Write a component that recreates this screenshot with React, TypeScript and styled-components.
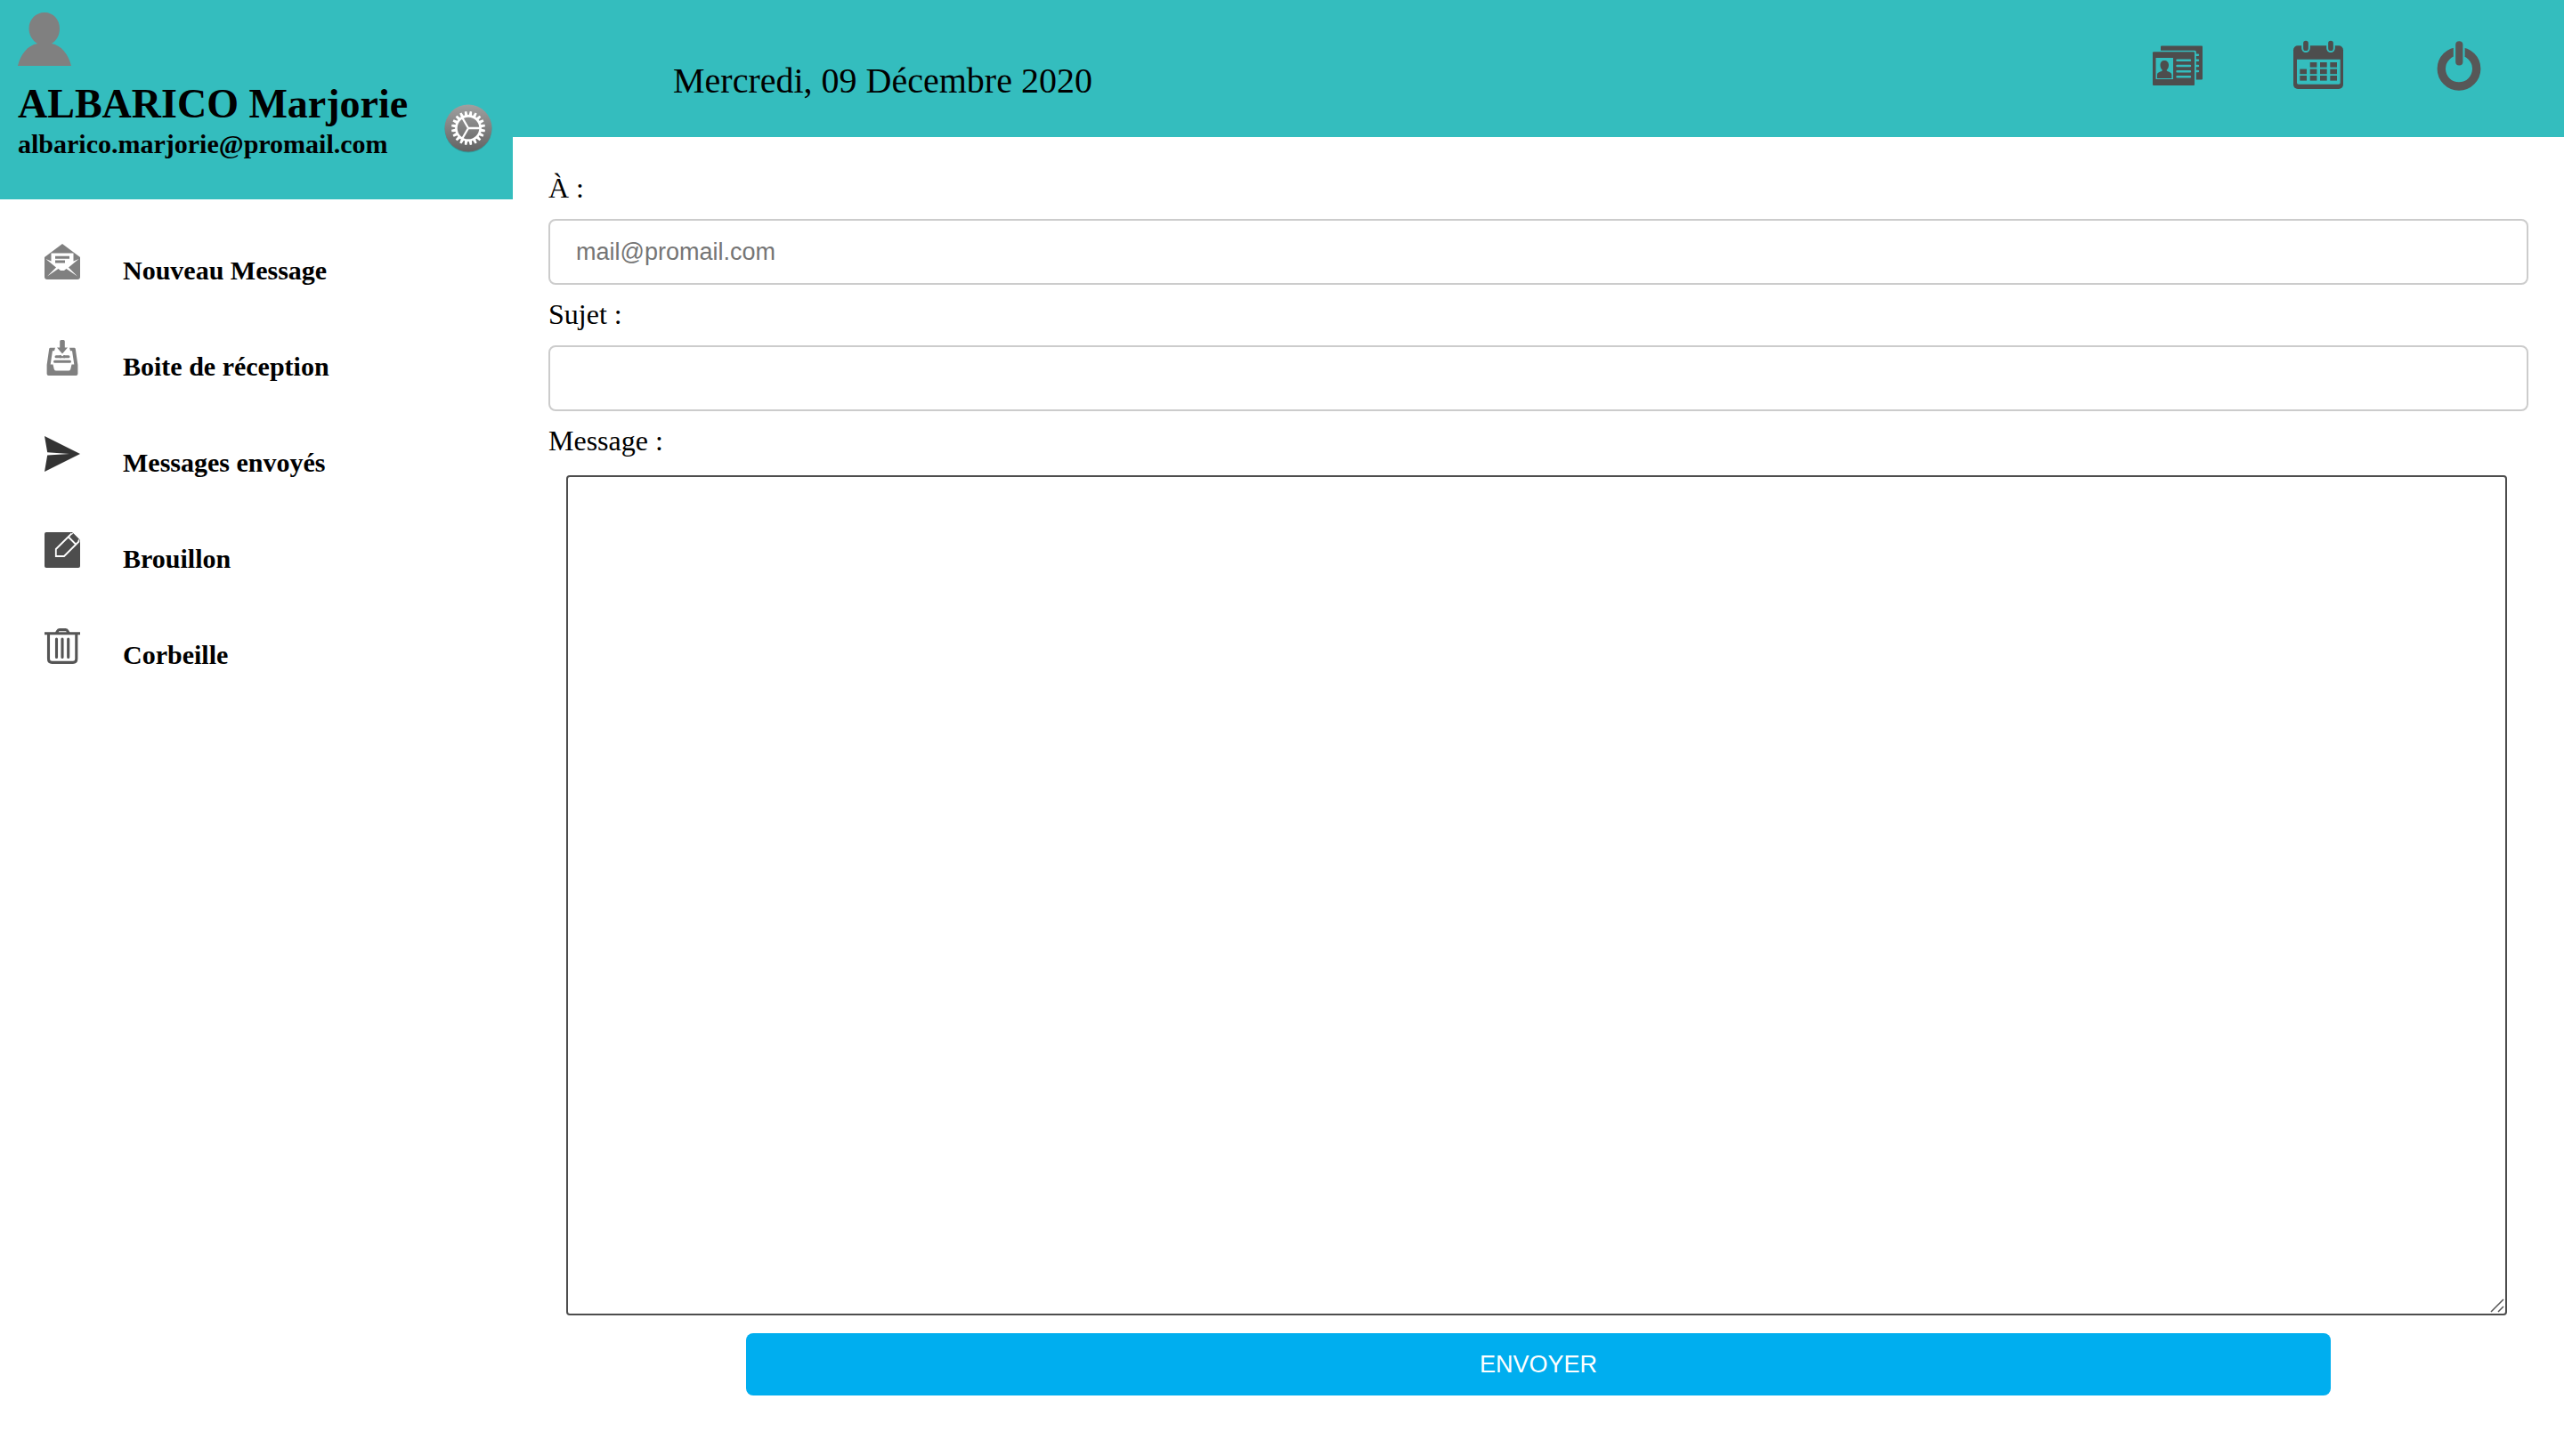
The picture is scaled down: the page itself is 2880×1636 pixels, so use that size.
import React from "react";
import styled, { createGlobalStyle } from "styled-components";

const TEAL = "#34bdbe";
const SERIF = '"Liberation Serif", "Times New Roman", serif';
const SANS = '"Liberation Sans", Arial, sans-serif';

const GlobalStyle = createGlobalStyle`
  *, *::before, *::after { box-sizing: border-box; }
  body { margin: 0; background: #fff; color: #000; font-family: ${SERIF}; }
  h1, p, ul { margin: 0; padding: 0; }
`;

const Layout = styled.div`
  display: grid;
  grid-template-columns: 20% 1fr;
  align-items: start;
`;

const Profile = styled.div`
  padding: 14px 14px 44px 20px;
  background: ${TEAL};
`;

const ProfileRow = styled.div`
  display: flex;
  align-items: flex-end;
  justify-content: space-between;
  margin-top: 16px;
`;

const ProfileName = styled.h1`
  font-size: 46px;
  line-height: 54px;
  font-weight: bold;
  white-space: nowrap;
`;

const ProfileMail = styled.p`
  font-size: 30px;
  line-height: 36px;
  font-weight: bold;
`;

const SettingsButton = styled.button`
  display: grid;
  place-items: center;
  width: 72px;
  height: 72px;
  padding: 0;
  border: 0;
  background: none;
  cursor: pointer;
`;

const Icon = styled.svg<{ $size: number }>`
  display: block;
  flex: none;
  width: ${(p) => p.$size}px;
  height: ${(p) => p.$size}px;
  overflow: visible;
`;

const FolderList = styled.ul`
  display: flex;
  flex-direction: column;
  gap: 60px;
  padding: 50px;
  list-style: none;
`;

const FolderLink = styled.a`
  display: flex;
  align-items: baseline;
  gap: 48px;
  color: inherit;
  font-size: 30px;
  line-height: 36px;
  font-weight: bold;
  text-decoration: none;
`;

const TopBar = styled.header`
  display: flex;
  align-items: baseline;
  justify-content: space-between;
  padding: 44px 88px 40px 180px;
  background: ${TEAL};
`;

const Today = styled.p`
  font-size: 40px;
  line-height: 46px;
`;

const Tools = styled.nav`
  display: flex;
  align-items: baseline;
  gap: 98px;
`;

const ToolLink = styled.a`
  display: flex;
  align-items: baseline;
`;

const Compose = styled.form`
  display: flex;
  flex-direction: column;
  padding: 40px 40px 0;
`;

const Label = styled.label`
  font-size: 32px;
  line-height: 34px;
`;

const TextField = styled.input`
  width: 100%;
  height: 74px;
  margin: 18px 0 16px;
  padding: 0 29px;
  border: 2px solid #ccc;
  border-radius: 8px;
  background: #fff;
  font-family: ${SANS};
  font-size: 27px;

  &::placeholder { color: #757575; opacity: 1; }
`;

const MessageBox = styled.div`
  position: relative;
  width: 98%;
  margin: 22px 20px 20px;
`;

const MessageArea = styled.textarea`
  display: block;
  width: 100%;
  padding: 5px;
  border: 2px solid #4d4d4d;
  border-radius: 4px;
  background: #fff;
  font-family: ${SANS};
  font-size: 27px;
  line-height: 30px;
  resize: vertical;

  &::-webkit-resizer { background: transparent; }
`;

const Grip = styled.svg`
  position: absolute;
  right: 3px;
  bottom: 3px;
  width: 16px;
  height: 16px;
  pointer-events: none;
`;

const SendButton = styled.button`
  align-self: center;
  width: 80%;
  height: 70px;
  border: 0;
  border-radius: 8px;
  background: #00aeef;
  color: #fff;
  font-family: ${SANS};
  font-size: 27px;
  cursor: pointer;
`;

const AvatarIcon = () => (
  <Icon $size={60} viewBox="0 0 60 60" fill="#808080" aria-hidden="true">
    <path d="M0 60C3 47 11 37 22 35C16 31 12.500 25 12.500 18C12.500 8 20 0 30 0S47 8 47 18C47 25 44 31 38 35C49 37 57 47 60 60Z" />
  </Icon>
);

const teeth = Array.from({ length: 20 }, (_, i) => i * 18 + 9);

const SettingsIcon = () => (
  <Icon $size={54} viewBox="0 0 54 54" aria-hidden="true">
    <defs>
      <linearGradient id="dial" x1="0" y1="0" x2="0" y2="1">
        <stop offset="0" stopColor="#a0a0a0" />
        <stop offset="1" stopColor="#626262" />
      </linearGradient>
    </defs>
    <circle cx="27" cy="28" r="26.500" fill="#000" opacity="0.15" />
    <circle cx="27" cy="27" r="26.500" fill="url(#dial)" />
    <g fill="#fff">
      {teeth.map((angle) => (
        <path key={angle} d="M25.200 13L25.800 8H28.200L28.800 13Z" transform={`rotate(${angle} 27 27)`} />
      ))}
    </g>
    <g fill="none" stroke="#fff">
      <circle cx="27" cy="27" r="13.600" strokeWidth="2.600" />
      <path d="M27 27H40M27 27L20.500 15.700M27 27L20.500 38.300" strokeWidth="2.300" />
    </g>
  </Icon>
);

const NewMessageIcon = () => (
  <Icon $size={40} viewBox="0 0 40 40" aria-hidden="true">
    <path fill="#808080" d="M20 0L40 15V37Q40 40 37 40H3Q0 40 0 37V15Z" />
    <path fill="#fff" d="M7.500 10.500H32.500V19.500L38.500 17L27 26.500L37 36.500L24.500 28L22 30H18L15.500 28L3 36.500L13 26.500L1.500 17L7.500 19.500Z" />
    <path stroke="#808080" strokeWidth="3" d="M12 15.300H28M12 20H23" />
  </Icon>
);

const InboxIcon = () => (
  <Icon $size={40} viewBox="0 0 40 40" fill="#808080" aria-hidden="true">
    <path d="M17.200 1.500Q17.200 0 18.700 0H21.300Q22.800 0 22.800 1.500V8.500H26L20 15.500L14 8.500H17.200Z" />
    <path d="M6.500 8.700H12L11 12.300H9L6.700 27.500H9.500L10.800 33Q11.500 34.500 13 34.500H27Q28.500 34.500 29.200 33L30.500 27.500H33.300L31 12.300H29L28 8.700H33.500Q34.500 8.700 34.800 10L37.400 28V38Q37.400 40 35.400 40H4.600Q2.600 40 2.600 38V28L5.200 10Q5.500 8.700 6.500 8.700Z" />
    <path stroke="#808080" strokeWidth="3" strokeLinecap="round" d="M13 18.700H18M22 18.700H27M11.500 24.300H28.500" />
    <path d="M17 17.300H18.500L20 18.500L21.500 17.300H23V20.200H17Z" />
  </Icon>
);

const SentIcon = () => (
  <Icon $size={40} viewBox="0 0 40 40" fill="#333" aria-hidden="true">
    <path d="M0 0L40 20L0 40L3.200 21.500L28 20L3.200 18.200Z" />
  </Icon>
);

const DraftIcon = () => (
  <Icon $size={40} viewBox="0 0 40 40" aria-hidden="true">
    <path fill="#4d4d4d" d="M2 0H31L40 9V38Q40 40 38 40H2Q0 40 0 38V2Q0 0 2 0Z" />
    <path fill="#4d4d4d" stroke="#fff" strokeWidth="1.800" d="M30.500 1.500L12.800 19V27H22L39 10" />
    <path fill="none" stroke="#fff" strokeWidth="1.800" d="M27 5.500L35 13.500M30.500 1.500L39 10" />
    <path fill="#4d4d4d" d="M32.500 1.500L38.500 7.500L37 10.500L29.500 3.500Z" />
  </Icon>
);

const TrashIcon = () => (
  <Icon $size={40} viewBox="0 0 40 40" fill="none" stroke="#555" strokeWidth="3.100" aria-hidden="true">
    <path d="M0 5.700H40M13.500 5L15 2.500Q15.500 1.600 17 1.600H23.500Q25 1.600 25.500 2.500L27 5M4.500 6V34.500Q4.500 38.400 8.400 38.400H32Q35.800 38.400 35.800 34.500V6" />
    <path strokeLinecap="round" d="M13.500 12V32.500M20 12V32.500M26.700 12V32.500" />
  </Icon>
);

const ContactsIcon = () => (
  <Icon $size={60} viewBox="0 0 60 60" fill="#4d4d4d" aria-hidden="true">
    <path d="M12 7.500H57Q58 7.500 58 8.500V44.500Q58 45.500 57 45.500H50.800V14Q50.500 12.800 49 12.800H11V8.500Q11 7.500 12 7.500Z" />
    <path d="M3 14.300H48Q49 14.300 49 15.300V51Q49 52 48 52H3Q2 52 2 51V15.300Q2 14.300 3 14.300Z" />
    <path fill={TEAL} d="M5.500 21H25V45H5.500Z" />
    <path d="M15 24C18 24 20 26 20 29C20 32 19 33.500 17.500 35C19 37 23 36.500 23.300 40V44H7V40C7.300 36.500 11.500 37 13 35C11.500 33.500 10.500 32 10.500 29C10.500 26 12 24 15 24Z" />
    <path stroke={TEAL} strokeWidth="2.400" strokeLinecap="round" d="M29.500 23.800H44M29.500 30H44M29.500 36.300H44M29.500 42.300H44" />
    <path stroke={TEAL} strokeWidth="2.400" strokeLinecap="round" d="M51 17.700H53M51 23.800H53M51 30H53M51 36H53" />
  </Icon>
);

const cellColumns = [9.3, 20.7, 32, 43.3];
const cellRows = [26, 33.6, 41];

const CalendarIcon = () => (
  <Icon $size={60} viewBox="0 0 60 60" fill="#4d4d4d" aria-hidden="true">
    <rect x="2" y="7.300" width="56" height="48.700" rx="5" />
    <path fill={TEAL} d="M6 22.700H54.700V49Q54.700 50.700 53 50.700H7.700Q6 50.700 6 49Z" />
    {cellRows.map((y, row) =>
      cellColumns.map((x, col) =>
        row === 0 && col === 0 ? null : <rect key={`${x}-${y}`} x={x} y={y} width="7.700" height="5.600" />
      )
    )}
    <path stroke={TEAL} strokeWidth="9.600" strokeLinecap="round" d="M16 6V10.300M44 6V10.300" />
    <path stroke="#4d4d4d" strokeWidth="5.700" strokeLinecap="round" d="M16 4.600V10.200M44 4.600V10.200" />
  </Icon>
);

const PowerIcon = () => (
  <Icon $size={60} viewBox="0 0 60 60" aria-hidden="true">
    <circle cx="30" cy="33.300" r="19.700" fill="none" stroke="#575757" strokeWidth="9.400" />
    <path fill={TEAL} d="M23.800 8H36.600V19.500Q30 24 23.800 19.500Z" />
    <path stroke="#575757" strokeWidth="8.200" strokeLinecap="round" d="M30.300 6.300V25.500" />
  </Icon>
);

const folders = [
  { name: "Nouveau Message", Glyph: NewMessageIcon },
  { name: "Boite de réception", Glyph: InboxIcon },
  { name: "Messages envoyés", Glyph: SentIcon },
  { name: "Brouillon", Glyph: DraftIcon },
  { name: "Corbeille", Glyph: TrashIcon },
];

const tools = [
  { name: "Contacts", Glyph: ContactsIcon },
  { name: "Calendrier", Glyph: CalendarIcon },
  { name: "Déconnexion", Glyph: PowerIcon },
];

export default function App() {
  return (
    <>
      <GlobalStyle />
      <Layout>
        <aside>
          <Profile>
            <AvatarIcon />
            <ProfileRow>
              <div>
                <ProfileName>ALBARICO Marjorie</ProfileName>
                <ProfileMail>albarico.marjorie@promail.com</ProfileMail>
              </div>
              <SettingsButton type="button" aria-label="Paramètres">
                <SettingsIcon />
              </SettingsButton>
            </ProfileRow>
          </Profile>
          <nav>
            <FolderList>
              {folders.map(({ name, Glyph }) => (
                <li key={name}>
                  <FolderLink href="#">
                    <Glyph />
                    <span>{name}</span>
                  </FolderLink>
                </li>
              ))}
            </FolderList>
          </nav>
        </aside>
        <main>
          <TopBar>
            <Today>Mercredi, 09 Décembre 2020</Today>
            <Tools>
              {tools.map(({ name, Glyph }) => (
                <ToolLink key={name} href="#" aria-label={name}>
                  <Glyph />
                </ToolLink>
              ))}
            </Tools>
          </TopBar>
          <Compose onSubmit={(event) => event.preventDefault()}>
            <Label htmlFor="to">À :</Label>
            <TextField id="to" type="email" placeholder="mail@promail.com" />
            <Label htmlFor="subject">Sujet :</Label>
            <TextField id="subject" type="text" />
            <Label htmlFor="message">Message :</Label>
            <MessageBox>
              <MessageArea id="message" rows={31} />
              <Grip viewBox="0 0 16 16" fill="none" stroke="#555" strokeWidth="1.500" aria-hidden="true">
                <path d="M1 15L15 1M9 15L15 9" />
              </Grip>
            </MessageBox>
            <SendButton type="submit">ENVOYER</SendButton>
          </Compose>
        </main>
      </Layout>
    </>
  );
}
